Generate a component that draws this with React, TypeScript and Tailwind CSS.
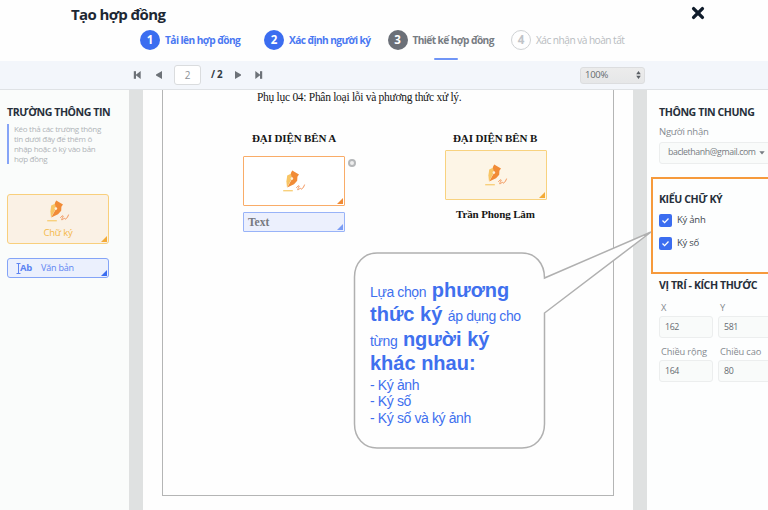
import React from "react";

const sans = "font-['Open_Sans','Noto_Sans',sans-serif]";
const serif = "font-['Liberation_Serif',serif]";
const arial = "font-['Liberation_Sans',sans-serif]";

function PenIcon() {
  return (
    <svg width="24" height="24" viewBox="0 0 24 24" fill="none" className="block shrink-0">
      <path d="M10 4.2 5.2 6.6 4.4 12.4 5 18.4 9.6 10Z" fill="#f8c564" />
      <path d="M8.8 4.2 10.2 1.6 17 5.6 15.4 7.8 15.2 11.8 12 15.2 5.2 18.6 10 10Z" fill="#f18b36" />
      <circle cx="9.9" cy="9.6" r="1.3" fill="#fdf1dc" />
      <path d="M1.2 21.7H10.8" stroke="#f8d07c" strokeWidth="1.4" />
      <path d="M14.4 18.8C16 16.4 18.2 16 16.6 18.6 15 21.2 15.4 21.6 17.8 19.6 19.2 18.4 18.6 20.8 19.8 20 21 19.2 22 17.4 22.6 15.6" stroke="#f3955a" strokeWidth="1" />
    </svg>
  );
}

function Corner({ className }: { className: string }) {
  return (
    <svg width="6" height="6" viewBox="0 0 6 6" className={`absolute right-px bottom-px ${className}`}>
      <path d="M6 0V6H0Z" fill="currentColor" />
    </svg>
  );
}

function Step({ n, label, circle, text }: { n: number; label: string; circle: string; text: string }) {
  return (
    <div className="flex items-center gap-[5px]">
      <span className={`flex size-5 shrink-0 items-center justify-center rounded-full text-[11.5px] font-bold ${circle}`}>{n}</span>
      <span className={`relative top-px whitespace-nowrap text-[10.2px] ${text}`}>{label}</span>
    </div>
  );
}

function Header() {
  return (
    <header className="h-[61px] bg-[#fefefe]">
      <div className="flex h-[30px] items-center justify-between pr-[63px] pl-[71px]">
        <h1 className="relative -top-px text-[15px] font-bold tracking-[-0.62px] text-[#1d2733]">Tạo hợp đồng</h1>
        <svg width="14" height="14" viewBox="0 0 14 14" className="relative -top-0.5">
          <path d="M2.6 2.6 11.4 11.4M11.4 2.6 2.6 11.4" stroke="#101c2b" strokeWidth="3.4" strokeLinecap="round" />
        </svg>
      </div>
      <nav className="grid h-5 grid-cols-[124px_123.5px_123.5px_auto] pl-[140px]">
        <Step n={1} label="Tải lên hợp đồng" circle="bg-[#3b6df0] text-white" text="font-bold text-[#4a78f2] tracking-[-0.57px]" />
        <Step n={2} label="Xác định người ký" circle="bg-[#3b6df0] text-white" text="font-bold text-[#4a78f2] tracking-[-0.6px]" />
        <Step n={3} label="Thiết kế hợp đồng" circle="bg-[#6b7078] text-white" text="font-bold text-[#777c83] tracking-[-0.62px]" />
        <Step n={4} label="Xác nhận và hoàn tất" circle="border border-[#cfd2d4] text-[#bfc3c7]" text="text-[#b8bcc0] tracking-[-0.55px]" />
      </nav>
      <div className="mt-2 ml-[434px] h-0.5 w-[24px] rounded bg-[#7095f6]" />
    </header>
  );
}

function Play({ flip, bar }: { flip?: boolean; bar?: boolean }) {
  return (
    <svg width="8" height="8" viewBox="0 0 8 8" fill="#6d7278" className={`block ${flip ? "-scale-x-100" : ""}`}>
      <path d={bar ? "M.3 0 5.5 4 .3 8Z" : "M1 0 7 3.6V4.4L1 8Z"} />
      {bar && <path d="M5 .2H7.2V7.8H5Z" />}
    </svg>
  );
}

function Toolbar() {
  return (
    <div className="flex h-[29px] items-center border-b border-[#dfe2e5] bg-[#f3f6fb] pl-[133px]">
      <Play flip bar />
      <span className="ml-[14px]"><Play flip /></span>
      <div className="ml-[11px] flex h-5 w-[27px] items-center justify-center rounded-[3px] border border-[#dadcde] bg-white text-[10px] text-[#8c9197]">2</div>
      <span className="ml-[10px] w-[13px] whitespace-nowrap text-[9.8px] font-bold tracking-[-0.3px] text-[#343b43]">/ 2</span>
      <span className="ml-[10px]"><Play /></span>
      <span className="ml-[13px]"><Play bar /></span>
      <div className="ml-[317px] flex h-[17px] w-[65px] items-center justify-between rounded-[3px] border border-[#dcdddf] bg-linear-to-b from-[#ececec] to-[#e6e7e8] pr-[3px] pl-[4px] text-[9.5px] tracking-[-0.3px] text-[#666b70]">
        100%
        <svg width="5" height="8" viewBox="0 0 5 8" fill="#5a5f65"><path d="M2.5 0 4.8 3.3H.2ZM2.5 8 4.8 4.7H.2Z" /></svg>
      </div>
    </div>
  );
}

function FieldsPanel() {
  return (
    <aside className="w-[129px] shrink-0 bg-[#fafcfb] pt-[14px] pl-[7px]">
      <h2 className="h-4 text-[10.6px] leading-4 font-bold tracking-[-0.44px] whitespace-nowrap text-[#27303b]">TRƯỜNG THÔNG TIN</h2>
      <p className="mt-1 h-10 border-l-2 border-[#86a4f6] pl-[5px] text-[8px] leading-[10px] tracking-[-0.3px] whitespace-nowrap text-[#b0b4b8]">
        Kéo thả các trường thông<br />tin dưới đây để thêm ô<br />nhập hoặc ô ký vào bản<br />hợp đồng
      </p>
      <div className="relative mt-[30px] flex h-[50px] w-[102px] flex-col items-center rounded-[3px] border border-[#f8cf7c] bg-[#faf1e5] pt-[4px]">
        <PenIcon />
        <span className="text-[9.5px] leading-[19px] tracking-[-0.2px] text-[#f4b849]">Chữ ký</span>
        <Corner className="text-[#f3ab38]" />
      </div>
      <div className="relative mt-[14px] flex h-[20px] w-[102px] items-center rounded-[3px] border border-[#84a4f7] bg-[#ebf0fd] pl-[8px] text-[9px] tracking-[-0.2px] text-[#5c84f2]">
        <svg width="5" height="11" viewBox="0 0 5 11" fill="none" stroke="#5c84f2" className="shrink-0"><path d="M.5 .5H4.5M.5 10.5H4.5M2.5 .5V10.5" /></svg>
        <b className="-ml-px w-[12px] text-[9.5px]">Ab</b>
        <span className="ml-[9px] whitespace-nowrap">Văn bản</span>
        <Corner className="text-[#3b6df0]" />
      </div>
    </aside>
  );
}

function DocumentPage() {
  return (
    <main className="flex w-[518px] shrink-0 justify-center bg-[#dfe1e1]">
      <div className="h-full w-[490px] bg-[#fefefe] pl-[19px]">
        <div className={`h-[406px] w-[452px] border border-t-0 border-[#b4b5b5] text-[#161616] ${serif}`}>
          <p className="h-[14px] pl-[94px] text-[11.5px] leading-[14px] tracking-[-0.29px] whitespace-nowrap">Phụ lục 04: Phân loại lỗi và phương thức xử lý.</p>
          <div className="flex pt-[27px] pl-[80px]">
            <section className="w-[202px]">
              <h3 className="h-[14px] pl-[9px] text-[11px] leading-[14px] font-bold tracking-[-0.12px] whitespace-nowrap">ĐẠI DIỆN BÊN A</h3>
              <div className="relative mt-[11px] flex h-[50px] w-[102px] items-center justify-center rounded-[1px] border border-[#f9ac68] bg-white">
                <PenIcon />
                <Corner className="text-[#f08a35]" />
                <span className="absolute top-[2px] -right-[12px] size-2 rounded-full border-[2.5px] border-[#b5b7b9] bg-[#eeeeee]" />
              </div>
              <div className="relative mt-[6px] h-[20px] w-[102px] rounded-[1px] border border-[#98b3f8] bg-[#ecf0fd] pl-[4px] text-[11.5px] leading-[19px] font-bold text-[#77797f]">
                Text
                <Corner className="text-[#7a9cf5]" />
              </div>
            </section>
            <section>
              <h3 className="h-[14px] pl-[8px] text-[11px] leading-[14px] font-bold tracking-[-0.12px] whitespace-nowrap">ĐẠI DIỆN BÊN B</h3>
              <div className="relative mt-[5px] flex h-[50px] w-[102px] items-center justify-center rounded-[1px] border border-[#f8d27f] bg-[#fdf5e6]">
                <PenIcon />
                <Corner className="text-[#f3ab38]" />
              </div>
              <p className="mt-[7px] h-[14px] pl-[11px] text-[11px] leading-[14px] font-bold tracking-[-0.12px] whitespace-nowrap">Trần Phong Lâm</p>
            </section>
          </div>
        </div>
      </div>
    </main>
  );
}

function Check({ label }: { label: string }) {
  return (
    <label className="flex h-[13px] items-center gap-[5px] text-[9.5px] tracking-[-0.25px] text-[#40474f]">
      <span className="flex size-[13px] items-center justify-center rounded-[2px] bg-[#3b6df0]">
        <svg width="9" height="9" viewBox="0 0 9 9" fill="none" stroke="white" strokeWidth="1.3"><path d="M1.5 4.5 3.6 6.6 7.5 2.5" /></svg>
      </span>
      {label}
    </label>
  );
}

function NumberField({ label, value }: { label: string; value: string }) {
  return (
    <div className="w-[54px] shrink-0">
      <div className="h-4 pl-0.5 text-[9.3px] leading-4 tracking-[-0.15px] whitespace-nowrap text-[#858a90]">{label}</div>
      <div className="h-[22px] rounded-[3px] border border-[#eceeee] bg-[#f9fbfa] pl-[5px] text-[8.8px] leading-[20px] tracking-[-0.4px] text-[#666b71]">{value}</div>
    </div>
  );
}

function PropertiesPanel() {
  const heading = "h-4 text-[10.6px] leading-4 font-bold whitespace-nowrap text-[#27303b] tracking-[-0.42px]";
  return (
    <aside className="w-[121px] shrink-0 overflow-hidden bg-[#fdfefe] pt-[14px]">
      <div className="pl-3">
        <h2 className={heading}>THÔNG TIN CHUNG</h2>
        <div className="mt-[4px] h-4 text-[9.5px] leading-4 tracking-[-0.25px] text-[#858a90]">Người nhận</div>
        <div className="mt-[2px] flex h-[22px] w-[120px] items-center rounded-[3px] border border-[#eceeee] bg-[#f9fbfa] pl-[8px] text-[8.8px] tracking-[-0.42px] text-[#777c82]">
          baclethanh@gmail.com
          <svg width="6" height="4" viewBox="0 0 6 4" fill="#777c82" className="ml-[3px]"><path d="M.3 .3H5.7L3 3.5Z" /></svg>
        </div>
      </div>
      <div className="mt-[13px] ml-1 h-[97px] w-[130px] border-2 border-[#f69a3c] pt-[12px] pl-[6px]">
        <h2 className={heading}>KIỂU CHỮ KÝ</h2>
        <div className="mt-[7px] flex flex-col gap-[10px]">
          <Check label="Ký ảnh" />
          <Check label="Ký số" />
        </div>
      </div>
      <div className="pt-[3px] pl-3">
        <h2 className={heading}>VỊ TRÍ - KÍCH THƯỚC</h2>
        <div className="mt-[7px] flex gap-[5px]">
          <NumberField label="X" value="162" />
          <NumberField label="Y" value="581" />
        </div>
        <div className="mt-[6px] flex gap-[5px]">
          <NumberField label="Chiều rộng" value="164" />
          <NumberField label="Chiều cao" value="80" />
        </div>
      </div>
    </aside>
  );
}

function Callout() {
  return (
    <div className={`absolute top-[230px] left-[353px] h-[220px] w-[300px] text-[#3f70ee] ${arial}`}>
      <svg width="300" height="220" viewBox="0 0 300 220" className="absolute inset-0">
        <path d="M24 23H169C182 23 191.5 33 191.5 48L298 2 191.5 83V194C191.5 208 182 218 169 218H24C11 218 1.5 208 1.5 194V47C1.5 33 11 23 24 23Z" fill="#fefefe" stroke="#b0b0b0" strokeWidth="1.5" />
      </svg>
      <div className="relative pt-[47.5px] pl-[17px] whitespace-nowrap">
        <div className="text-[14px] leading-[24.6px] tracking-[-0.38px] [&_b]:text-[20px] [&_b]:tracking-normal">
          <div className="h-[24.6px]">Lựa chọn<b> phương</b></div>
          <div className="h-[24.6px]"><b>thức ký </b>áp dụng cho</div>
          <div className="h-[24.6px]">từng<b> người ký</b></div>
          <div className="h-[24.6px]"><b>khác nhau:</b></div>
        </div>
        <div className="pt-px text-[14px] leading-[16.6px] tracking-[-0.38px]">
          <div>- Ký ảnh</div>
          <div>- Ký số</div>
          <div>- Ký số và ký ảnh</div>
        </div>
      </div>
    </div>
  );
}

export default function App() {
  return (
    <div className={`relative flex h-[510px] w-[768px] flex-col overflow-hidden bg-white ${sans}`}>
      <Header />
      <Toolbar />
      <div className="flex min-h-0 flex-1">
        <FieldsPanel />
        <DocumentPage />
        <PropertiesPanel />
      </div>
      <Callout />
    </div>
  );
}
